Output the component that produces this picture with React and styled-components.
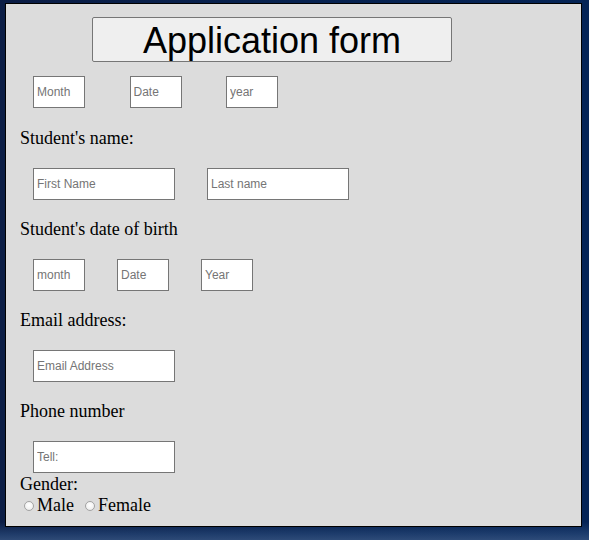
import React from 'react';
import styled, { createGlobalStyle } from 'styled-components';

const GlobalStyle = createGlobalStyle`
	html, body {
		margin: 0;
		padding: 0;
		height: 100%;
	}
	body {
		background-color: #03204d;
		background-image:
			linear-gradient(180deg, rgba(0, 0, 0, 0) 0, rgba(0, 0, 0, 0) 522px, rgba(40, 72, 120, 0.7) 534px, rgba(55, 85, 130, 0.8) 540px),
			linear-gradient(90deg, #0b1d45 0%, #06214f 50%, #052456 100%);
		font-family: "Liberation Serif", "Times New Roman", serif;
		overflow: hidden;
	}
`;

const Panel = styled.form`
	box-sizing: border-box;
	width: 577px;
	margin: 3px 0 0 5px;
	padding: 13px 14px 11px 14px;
	background-color: #dcdcdc;
	border: 1px solid #000;
	display: flex;
	flex-direction: column;
	align-items: flex-start;
`;

const Title = styled.div`
	box-sizing: border-box;
	width: 360px;
	height: 45px;
	margin-left: 72px;
	background-color: #efefef;
	border: 1px solid #767676;
	border-radius: 2px;
	font-family: "Liberation Sans", Arial, sans-serif;
	font-size: 36px;
	line-height: 45px;
	text-align: center;
	color: #000;
`;

const Row = styled.div`
	display: flex;
	gap: ${(p) => p.$gap}px;
	margin-top: ${(p) => p.$top}px;
	padding-left: 13px;
`;

const Field = styled.input`
	box-sizing: border-box;
	width: ${(p) => (p.$wide ? 142 : 52)}px;
	height: 32px;
	margin: 0;
	padding: 0 3px;
	border: 1px solid #767676;
	background: #fff;
	font-family: "Liberation Sans", Arial, sans-serif;
	font-size: 12px;
	color: #000;
	outline: none;
	&::placeholder {
		color: #757575;
	}
`;

const Label = styled.div`
	margin-top: ${(p) => p.$top}px;
	font-size: 18px;
	line-height: 20px;
	color: #000;
`;

const Options = styled.div`
	display: flex;
	align-items: center;
	margin-top: 1px;
	font-size: 18px;
	line-height: 20px;
`;

const Option = styled.label`
	display: flex;
	align-items: center;
	margin-right: 7px;
`;

const Radio = styled.input`
	appearance: none;
	box-sizing: border-box;
	width: 10px;
	height: 10px;
	margin: 1px 3px 0 4px;
	border: 1px solid #a3a3a3;
	border-radius: 50%;
	background: radial-gradient(circle at 50% 40%, #ffffff 0%, #f2f2f2 60%, #dedede 100%);
`;

export default function App() {
	return (
		<>
			<GlobalStyle />
			<Panel onSubmit={(e) => e.preventDefault()}>
				<Title>Application form</Title>
				<Row $gap={44.5} $top={14}>
					<Field placeholder='Month' />
					<Field placeholder='Date' />
					<Field placeholder='year' />
				</Row>

				<Label $top={20}>Student's name:</Label>
				<Row $gap={32} $top={20}>
					<Field $wide placeholder='First Name' />
					<Field $wide placeholder='Last name' />
				</Row>

				<Label $top={19}>Student's date of birth</Label>
				<Row $gap={32} $top={20}>
					<Field placeholder='month' />
					<Field placeholder='Date' />
					<Field placeholder='Year' />
				</Row>

				<Label $top={19}>Email address:</Label>
				<Row $gap={32} $top={20}>
					<Field $wide placeholder='Email Address' />
				</Row>

				<Label $top={19}>Phone number</Label>
				<Row $gap={32} $top={20}>
					<Field $wide placeholder='Tell:' />
				</Row>

				<Label $top={1}>Gender:</Label>
				<Options>
					<Option>
						<Radio type='radio' name='gender' value='male' />
						Male
					</Option>
					<Option>
						<Radio type='radio' name='gender' value='female' />
						Female
					</Option>
				</Options>
			</Panel>
		</>
	);
}
